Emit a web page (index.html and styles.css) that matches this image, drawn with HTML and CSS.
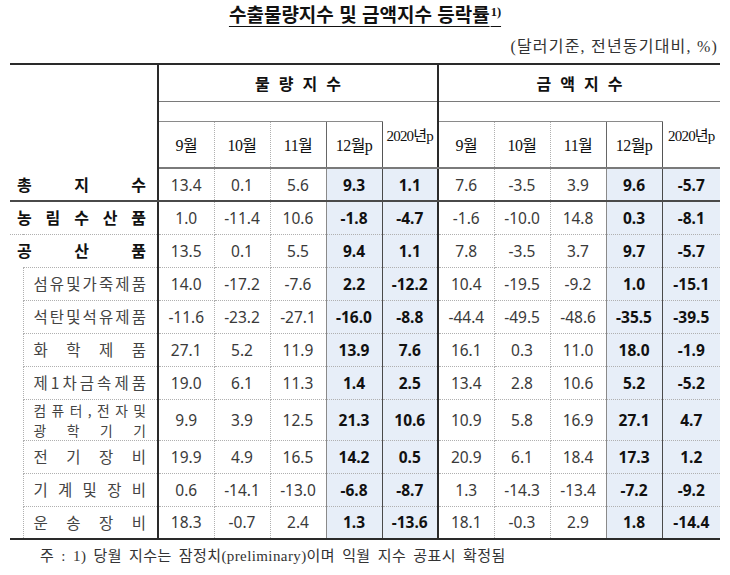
FILE: index.html
```html
<!DOCTYPE html>
<html lang="ko">
<head>
<meta charset="utf-8">
<title>수출물량지수 및 금액지수 등락률</title>
<link rel="stylesheet" href="styles.css">
</head>
<body>
<h1 class="title"><span>수출물량지수 및 금액지수 등락률<sup>1)</sup></span></h1>
<p class="unit">(달러기준, 전년동기대비, %)</p>
<table class="tbl">
  <colgroup>
    <col class="c-ind"><col class="c-lbl">
    <col class="c-n"><col class="c-n"><col class="c-n"><col class="c-n"><col class="c-n">
    <col class="c-n"><col class="c-n"><col class="c-n"><col class="c-n"><col class="c-last">
  </colgroup>
  <thead>
    <tr class="h1">
      <th class="corner" colspan="2" rowspan="3"></th>
      <th class="grp grp-a" colspan="5">물량지수</th>
      <th class="grp" colspan="5">금액지수</th>
    </tr>
    <tr class="h2">
      <th class="blank" colspan="4"></th>
      <th class="yr ya" rowspan="2">2020년p</th>
      <th class="blank" colspan="4"></th>
      <th class="yr" rowspan="2">2020년p</th>
    </tr>
    <tr class="h3">
      <th class="m">9월</th><th class="m">10월</th><th class="m m11">11월</th><th class="m m12">12월p</th>
      <th class="m">9월</th><th class="m">10월</th><th class="m m11">11월</th><th class="m m12">12월p</th>
    </tr>
  </thead>
  <tbody>
    <tr class="r r-total">
      <td class="lbl top" colspan="2"><div class="spread"><span>총</span><span>지</span><span>수</span></div></td>
      <td>13.4</td><td>0.1</td><td class="m11">5.6</td><td class="sh m12">9.3</td><td class="sh ya">1.1</td>
      <td>7.6</td><td>-3.5</td><td class="m11">3.9</td><td class="sh m12">9.6</td><td class="sh">-5.7</td>
    </tr>
    <tr class="r">
      <td class="lbl top" colspan="2"><div class="spread"><span>농</span><span>림</span><span>수</span><span>산</span><span>품</span></div></td>
      <td>1.0</td><td>-11.4</td><td class="m11">10.6</td><td class="sh m12">-1.8</td><td class="sh ya">-4.7</td>
      <td>-1.6</td><td>-10.0</td><td class="m11">14.8</td><td class="sh m12">0.3</td><td class="sh">-8.1</td>
    </tr>
    <tr class="r r-ind">
      <td class="lbl top nob" colspan="2"><div class="spread"><span>공</span><span>산</span><span>품</span></div></td>
      <td>13.5</td><td>0.1</td><td class="m11">5.5</td><td class="sh m12">9.4</td><td class="sh ya">1.1</td>
      <td>7.8</td><td>-3.5</td><td class="m11">3.7</td><td class="sh m12">9.7</td><td class="sh">-5.7</td>
    </tr>
    <tr class="r">
      <td class="indent" rowspan="8"></td>
      <td class="lbl sub"><div class="spread"><span>섬</span><span>유</span><span>및</span><span>가</span><span>죽</span><span>제</span><span>품</span></div></td>
      <td>14.0</td><td>-17.2</td><td class="m11">-7.6</td><td class="sh m12">2.2</td><td class="sh ya">-12.2</td>
      <td>10.4</td><td>-19.5</td><td class="m11">-9.2</td><td class="sh m12">1.0</td><td class="sh">-15.1</td>
    </tr>
    <tr class="r">
      <td class="lbl sub"><div class="spread"><span>석</span><span>탄</span><span>및</span><span>석</span><span>유</span><span>제</span><span>품</span></div></td>
      <td>-11.6</td><td>-23.2</td><td class="m11">-27.1</td><td class="sh m12">-16.0</td><td class="sh ya">-8.8</td>
      <td>-44.4</td><td>-49.5</td><td class="m11">-48.6</td><td class="sh m12">-35.5</td><td class="sh">-39.5</td>
    </tr>
    <tr class="r">
      <td class="lbl sub"><div class="spread"><span>화</span><span>학</span><span>제</span><span>품</span></div></td>
      <td>27.1</td><td>5.2</td><td class="m11">11.9</td><td class="sh m12">13.9</td><td class="sh ya">7.6</td>
      <td>16.1</td><td>0.3</td><td class="m11">11.0</td><td class="sh m12">18.0</td><td class="sh">-1.9</td>
    </tr>
    <tr class="r">
      <td class="lbl sub"><div class="spread"><span>제</span><span>1</span><span>차</span><span>금</span><span>속</span><span>제</span><span>품</span></div></td>
      <td>19.0</td><td>6.1</td><td class="m11">11.3</td><td class="sh m12">1.4</td><td class="sh ya">2.5</td>
      <td>13.4</td><td>2.8</td><td class="m11">10.6</td><td class="sh m12">5.2</td><td class="sh">-5.2</td>
    </tr>
    <tr class="r r-tall">
      <td class="lbl sub"><div class="spread two"><span>컴</span><span>퓨</span><span>터</span><span>,</span><span>전</span><span>자</span><span>및</span></div><div class="spread two"><span>광</span><span>학</span><span>기</span><span>기</span></div></td>
      <td>9.9</td><td>3.9</td><td class="m11">12.5</td><td class="sh m12">21.3</td><td class="sh ya">10.6</td>
      <td>10.9</td><td>5.8</td><td class="m11">16.9</td><td class="sh m12">27.1</td><td class="sh">4.7</td>
    </tr>
    <tr class="r">
      <td class="lbl sub"><div class="spread"><span>전</span><span>기</span><span>장</span><span>비</span></div></td>
      <td>19.9</td><td>4.9</td><td class="m11">16.5</td><td class="sh m12">14.2</td><td class="sh ya">0.5</td>
      <td>20.9</td><td>6.1</td><td class="m11">18.4</td><td class="sh m12">17.3</td><td class="sh">1.2</td>
    </tr>
    <tr class="r">
      <td class="lbl sub"><div class="spread"><span>기</span><span>계</span><span>및</span><span>장</span><span>비</span></div></td>
      <td>0.6</td><td>-14.1</td><td class="m11">-13.0</td><td class="sh m12">-6.8</td><td class="sh ya">-8.7</td>
      <td>1.3</td><td>-14.3</td><td class="m11">-13.4</td><td class="sh m12">-7.2</td><td class="sh">-9.2</td>
    </tr>
    <tr class="r r-last">
      <td class="lbl sub"><div class="spread"><span>운</span><span>송</span><span>장</span><span>비</span></div></td>
      <td>18.3</td><td>-0.7</td><td class="m11">2.4</td><td class="sh m12">1.3</td><td class="sh ya">-13.6</td>
      <td>18.1</td><td>-0.3</td><td class="m11">2.9</td><td class="sh m12">1.8</td><td class="sh">-14.4</td>
    </tr>
  </tbody>
</table>
<p class="note">주 : 1) 당월 지수는 잠정치(preliminary)이며 익월 지수 공표시 확정됨</p>
</body>
</html>
```

FILE: styles.css
```css
html, body {
  margin: 0;
  padding: 0;
  background: #ffffff;
}
body {
  width: 730px;
  font-family: "Noto Sans CJK KR", sans-serif;
  color: #222;
}
.title {
  margin: 0;
  padding-top: 2px;
  text-align: center;
  font-size: 19px;
  line-height: 23px;
  font-weight: 700;
  color: #111;
}
.title span {
  text-decoration: underline;
  text-decoration-thickness: 1px;
  text-underline-offset: 4px;
}
.title sup {
  font-family: "Liberation Serif", serif;
  font-size: 12.5px;
  font-weight: 700;
  line-height: 0;
  vertical-align: 6px;
  margin-left: 1px;
}
.unit {
  margin: 12px 0 0 0;
  padding-right: 12px;
  text-align: right;
  font-family: "Liberation Serif", "Noto Sans CJK KR", serif;
  font-size: 16px;
  letter-spacing: 1.2px;
  line-height: 20px;
  color: #333;
}
.tbl {
  margin: 6px 0 0 10px;
  width: 710px;
  table-layout: fixed;
  border-collapse: collapse;
  border-top: 2px solid #2a2a2a;
}
.c-ind { width: 13px; }
.c-lbl { width: 135px; }
.c-n { width: 56px; }
.c-last { width: 58px; }

.tbl th, .tbl td {
  padding: 0;
  text-align: center;
  vertical-align: middle;
}
.corner {
  border-right: 2px solid #2a2a2a;
}
.h1 { height: 37px; }
.h2 { height: 20px; }
.h3 { height: 47px; }
.grp {
  font-size: 16px;
  font-weight: 700;
  letter-spacing: 9px;
  text-indent: 9px;
  color: #111;
  border-bottom: 1px solid #7a7a7a;
}
.grp-a { border-right: 2px solid #2a2a2a; }
.blank {
  border-bottom: 1px solid #8a8a8a;
}
.yr {
  font-family: "Liberation Serif", "Noto Sans CJK KR", serif;
  font-size: 15px;
  font-weight: 400;
  letter-spacing: -0.8px;
  color: #111;
  vertical-align: middle;
  border-bottom: 2px solid #7a7a7a;
}
.yr.ya { border-right: 2px solid #2a2a2a; }
.m {
  font-family: "Liberation Serif", "Noto Sans CJK KR", serif;
  font-size: 16px;
  font-weight: 400;
  letter-spacing: -0.6px;
  color: #111;
  padding-top: 4px;
  border-right: 1px dotted #b0b0b0;
  border-bottom: 2px solid #7a7a7a;
}
.m.m11 { border-right: 1px solid #666; }
.m.m12 {
  border-top: 1px solid #666;
  border-right: 1px solid #555;
}

.r { height: 33px; }
.r-tall { height: 41px; }
.r td {
  font-family: "Noto Sans", "Noto Sans CJK KR", sans-serif;
  font-size: 15.5px;
  color: #3a3a3a;
  border-right: 1px dotted #b0b0b0;
  border-bottom: 1px dotted #b0b0b0;
}
.r td.m11 { border-right: 1px solid #8a8a8a; }
.r td.m12 { border-right: 1px solid #4a4a4a; }
.r td.ya { border-right: 2px solid #2a2a2a; }
.r td.sh {
  background: #e7eef8;
  font-weight: 700;
  color: #111;
}
.r td:last-child { border-right: none; }
.r td.lbl {
  border-right: 2px solid #2a2a2a;
  font-family: "Noto Sans CJK KR", sans-serif;
}
.r-total td { border-bottom: 2px solid #4a4a4a; }
.r td.nob { border-bottom: none; }
.r-last td { border-bottom: 2px solid #2a2a2a; }
.r td.indent {
  border-right: 1px dotted #b0b0b0;
  border-bottom: 2px solid #2a2a2a;
}
.lbl.top {
  padding: 0 11px 0 7px;
  font-size: 16px;
  font-weight: 700;
  color: #111;
}
.lbl.sub {
  padding: 0 11px 0 10px;
  font-size: 15.5px;
  font-weight: 400;
  color: #444;
  border-top: 1px dotted #b0b0b0;
}
.spread {
  display: flex;
  justify-content: space-between;
  line-height: 19px;
}
.spread.two {
  font-size: 13.8px;
  line-height: 20px;
  height: 20px;
}
.note {
  margin: 6px 0 0 0;
  padding-left: 40px;
  font-family: "Liberation Serif", "Noto Sans CJK KR", serif;
  font-size: 15px;
  line-height: 20px;
  letter-spacing: 0.4px;
  word-spacing: 3px;
  color: #333;
}
```
